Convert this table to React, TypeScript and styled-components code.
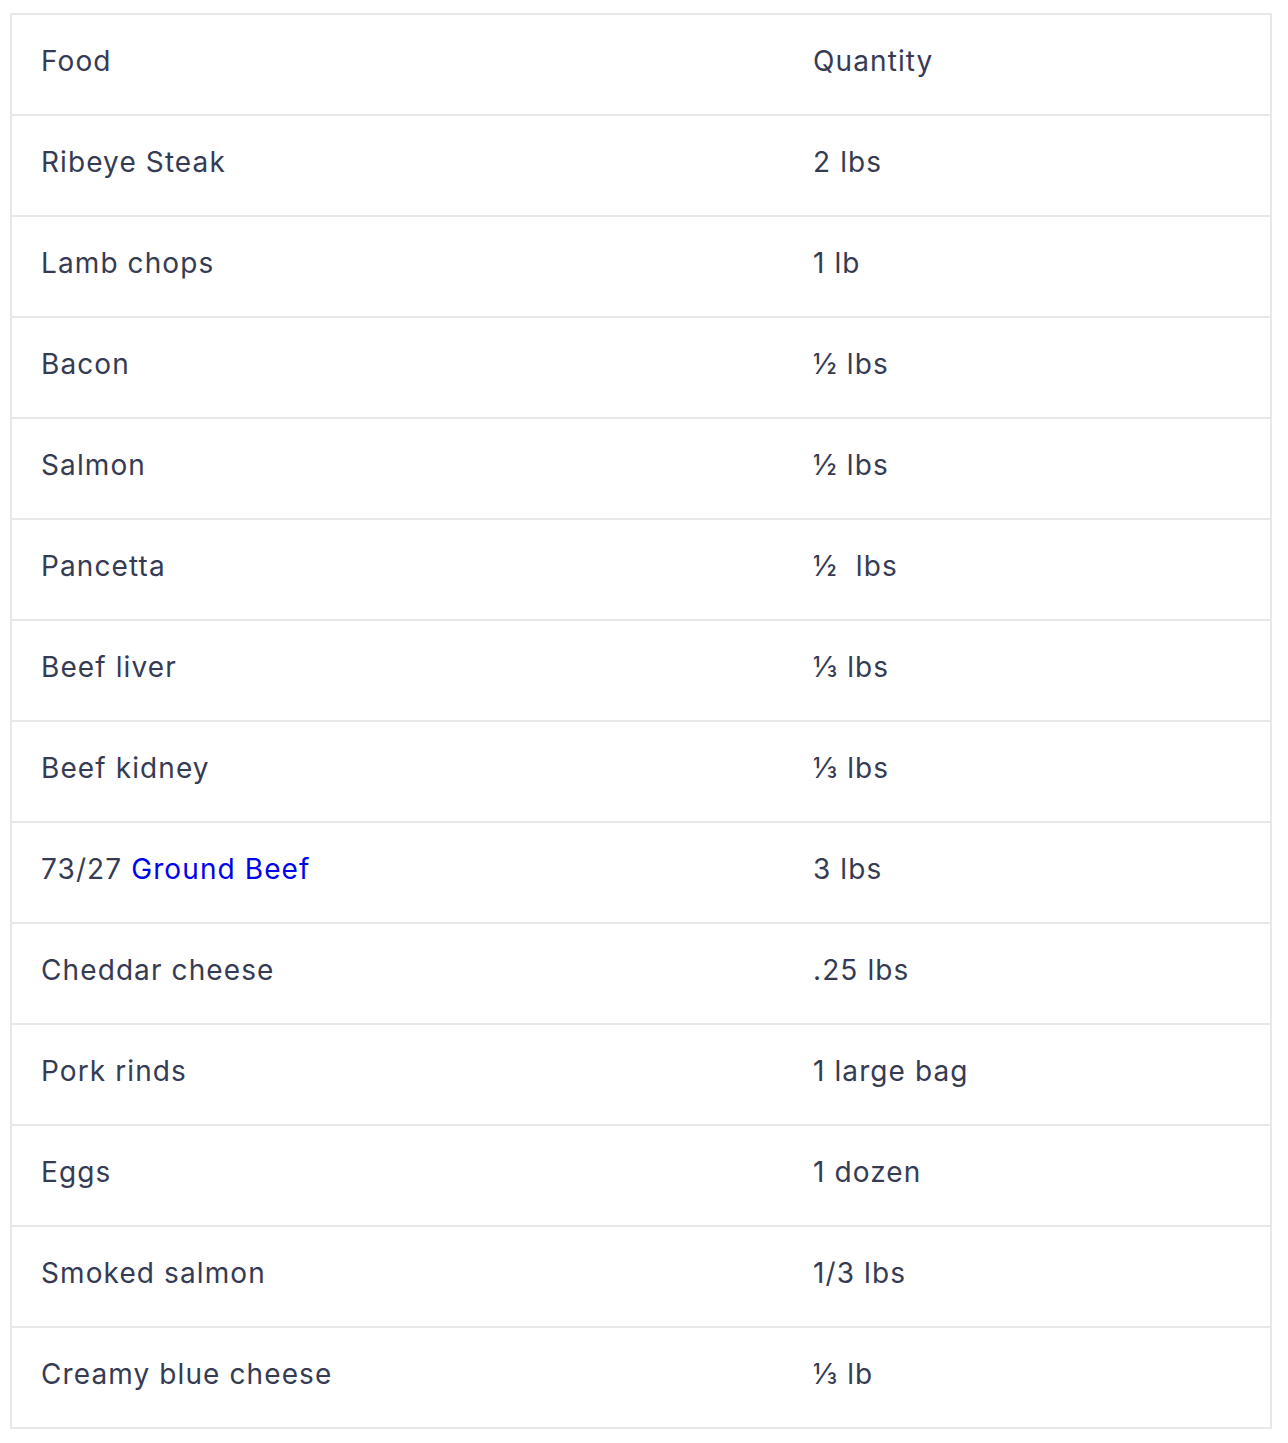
import styled, { createGlobalStyle } from "styled-components";

const GlobalStyle = createGlobalStyle`
  body {
    margin: 0;
    background: #ffffff;
    font-family: Inter, "Noto Sans", sans-serif;
  }
`;

const Page = styled.div`
  padding: 13px 16px 16px 10px;
`;

const Table = styled.table`
  width: 1262px;
  border-collapse: collapse;
  border: 2px solid #e8e8e8;
  color: #363b54;
  font-size: 28px;
  letter-spacing: 1.1px;
`;

const Row = styled.tr`
  border-top: 2px solid #e8e8e8;
`;

const Cell = styled.td<{ $wide?: boolean }>`
  width: ${(p) => (p.$wide ? "773px" : "auto")};
  height: 101px;
  padding: 0 29px 6px;
  box-sizing: border-box;
  vertical-align: middle;
  text-align: left;
  font-weight: 400;
  line-height: 1.2;
  white-space: pre;
`;

const FoodLink = styled.a`
  color: #0000ee;
  text-decoration: none;
`;

const rows: [React.ReactNode, string][] = [
  ["Ribeye Steak", "2 lbs"],
  ["Lamb chops", "1 lb"],
  ["Bacon", "½ lbs"],
  ["Salmon", "½ lbs"],
  ["Pancetta", "½  lbs"],
  ["Beef liver", "⅓ lbs"],
  ["Beef kidney", "⅓ lbs"],
  [
    <>
      73/27 <FoodLink href="#">Ground Beef</FoodLink>
    </>,
    "3 lbs",
  ],
  ["Cheddar cheese", ".25 lbs"],
  ["Pork rinds", "1 large bag"],
  ["Eggs", "1 dozen"],
  ["Smoked salmon", "1/3 lbs"],
  ["Creamy blue cheese", "⅓ lb"],
];

export default function App() {
  return (
    <>
      <GlobalStyle />
      <Page>
        <Table>
          <tbody>
            <Row>
              <Cell $wide>Food</Cell>
              <Cell>Quantity</Cell>
            </Row>
            {rows.map(([food, qty], i) => (
              <Row key={i}>
                <Cell $wide>{food}</Cell>
                <Cell>{qty}</Cell>
              </Row>
            ))}
          </tbody>
        </Table>
      </Page>
    </>
  );
}
